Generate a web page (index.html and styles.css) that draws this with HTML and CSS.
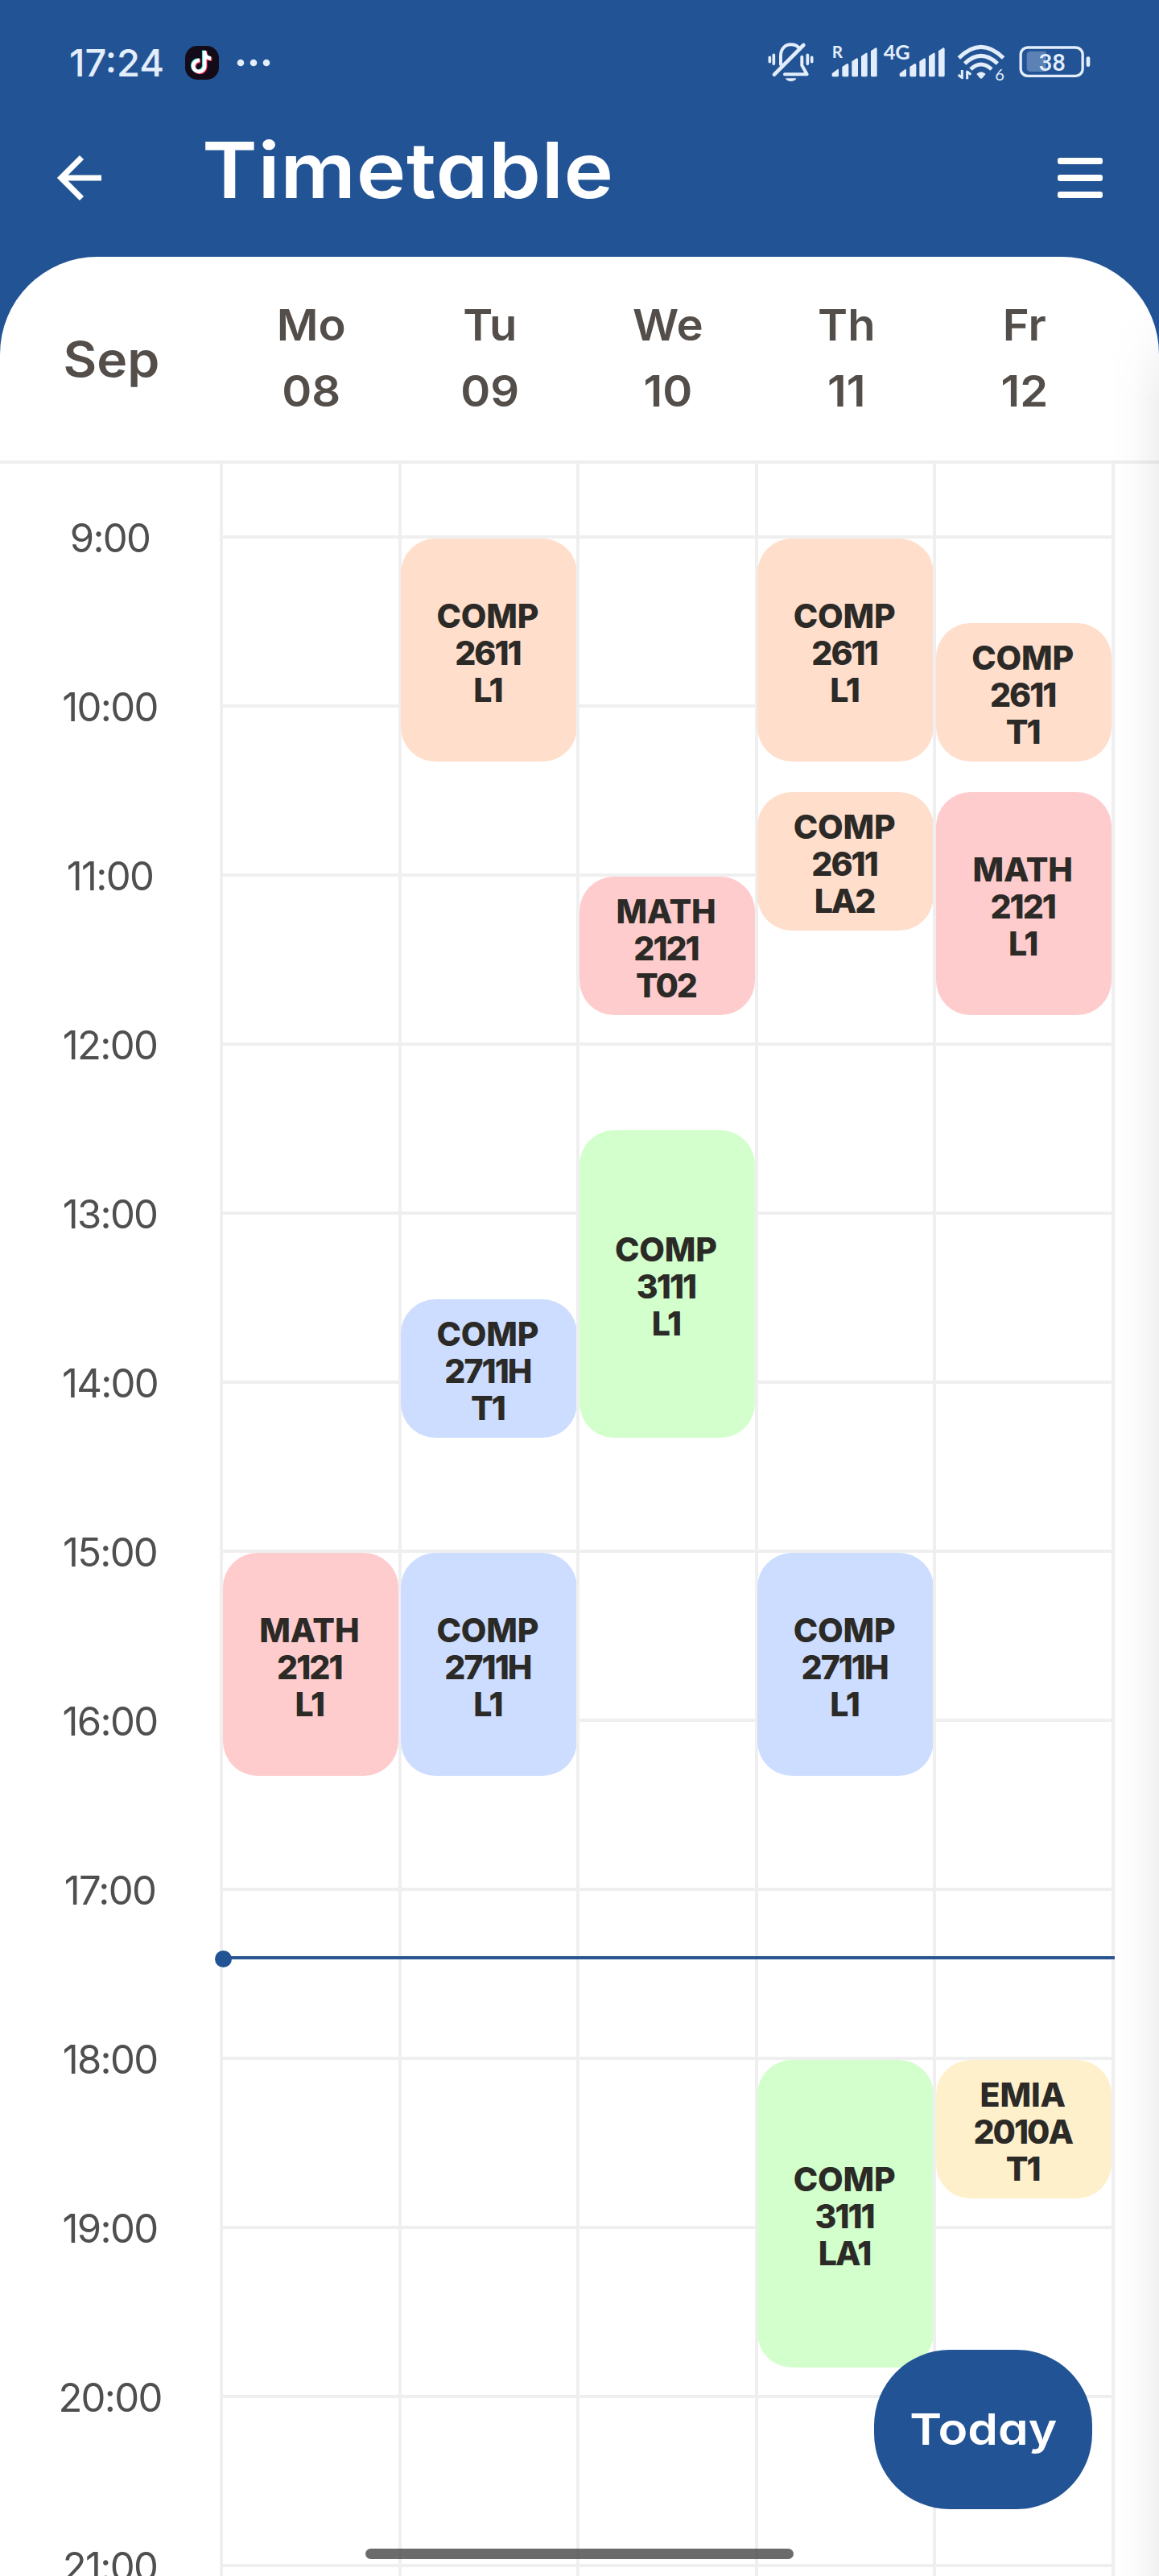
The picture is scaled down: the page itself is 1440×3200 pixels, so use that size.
FILE: index.html
```html
<!DOCTYPE html>
<html lang="en">
<head>
<meta charset="utf-8">
<title>Timetable</title>
<link rel="stylesheet" href="styles.css">
</head>
<body>
<div class="app">
  <div class="status-bar">
    <span class="clock">17:24</span>
    <svg class="tiktok" viewBox="0 0 42 42" width="42" height="42">
      <rect width="42" height="42" rx="15" fill="#130c18"/>
      <g fill="none" stroke-width="4.6">
        <path d="M24.2 6v19.5a7 7 0 1 1-6.2-7.4M24.2 8c.4 4.600 3.600 7.400 8 7.600" stroke="#35e0d6" transform="translate(-1 -.6)"/>
        <path d="M24.2 6v19.5a7 7 0 1 1-6.2-7.4M24.2 8c.4 4.600 3.600 7.400 8 7.600" stroke="#f5305a" transform="translate(1.100 1)"/>
        <path d="M24.2 6v19.5a7 7 0 1 1-6.2-7.4M24.2 8c.4 4.600 3.600 7.400 8 7.600" stroke="#fff"/>
      </g>
    </svg>
    <svg class="more" viewBox="0 0 42 10" width="42" height="10" fill="#e3edfb"><circle cx="5" cy="5" r="4.300"/><circle cx="21" cy="5" r="4.300"/><circle cx="37" cy="5" r="4.300"/></svg>
    <div class="indicators">
      <svg viewBox="100 60 230 160" width="76.667" height="53.333" fill="none" stroke="#e3edfb" stroke-linecap="round" stroke-linejoin="round">
        <path d="M110 124v16M125 115v33M251 115v33M267 124v16" stroke-width="11"/>
        <path d="M151 150V118c0-26 16-42 38-42 13 0 22 4 29 11M230 122v32l19 33H166" stroke-width="12"/>
        <path d="M236 78L127 188" stroke-width="14"/>
        <path d="M169 202h40c-5 15-35 15-40 0z" fill="#e3edfb" stroke="none"/>
      </svg>
      <svg viewBox="330 60 195 160" width="65" height="53.333" fill="#e3edfb">
        <text x="341" y="125" font-size="62" class="net">R</text>
        <path d="M341 184l22-17q3 0 3 4v20q0 5-5 5h-15q-5 0-5-5zM379 159l18-12q6-1 6 5v39q0 5-5 5h-14q-5 0-5-5zM415 139l18-12q5-1 5 5v59q0 5-5 5h-13q-5 0-5-5zM450 119l18-12q5-1 5 5v79q0 5-5 5h-13q-5 0-5-5zM486 100l18-12q5-1 5 5v98q0 5-5 5h-13q-5 0-5-5z"/>
      </svg>
      <svg viewBox="525 60 270 160" width="90" height="53.333" fill="#e3edfb">
        <text x="533" y="132" font-size="76" class="net">4G</text>
        <path transform="translate(252)" d="M341 184l22-17q3 0 3 4v20q0 5-5 5h-15q-5 0-5-5zM379 159l18-12q6-1 6 5v39q0 5-5 5h-14q-5 0-5-5zM415 139l18-12q5-1 5 5v59q0 5-5 5h-13q-5 0-5-5zM450 119l18-12q5-1 5 5v79q0 5-5 5h-13q-5 0-5-5zM486 100l18-12q5-1 5 5v98q0 5-5 5h-13q-5 0-5-5z"/>
      </svg>
      <svg viewBox="795 60 235 160" width="78.333" height="53.333" fill="none" stroke="#e3edfb" stroke-width="15">
        <path d="M814 126q82-82 166 0M836 147q60-57 122 0M858 168q38-36 78 0"/>
        <path d="M880 186q17-17 34 0l-12 14q-5 6-10 0z" fill="#e3edfb" stroke="none"/>
        <path d="M826 171v29l-14-11M845 205v-28l14 11" stroke-width="9" stroke-linejoin="round"/>
        <text x="949" y="209" font-size="60" class="wifi-gen">6</text>
      </svg>
      <svg viewBox="1030 60 290 160" width="96.667" height="53.333">
        <rect x="1045.500" y="87" width="231" height="106" rx="26" fill="none" stroke="#e3edfb" stroke-width="10"/>
        <path d="M1082 101h58v76h-58q-14 0-14-14v-48q0-14 14-14z" fill="#5c82b5"/>
        <rect x="1290" y="121" width="14" height="38" rx="7" fill="#e3edfb"/>
        <text x="1163" y="174" font-size="88" text-anchor="middle" class="charge">38</text>
      </svg>
    </div>
  </div>

  <header class="app-bar">
    <svg class="back" viewBox="0 0 64 64" width="64" height="64" fill="none" stroke="#fff" stroke-width="7.200"><path d="M34.500 6.500L9 32l25.500 25.500M9 32h50"/></svg>
    <h1 class="title">Timetable</h1>
    <div class="menu"><i></i><i></i><i></i></div>
  </header>

  <main class="sheet">
    <div class="days-head">
      <div class="month">Sep</div>
      <div class="day">Mo<br>08</div>
      <div class="day">Tu<br>09</div>
      <div class="day">We<br>10</div>
      <div class="day">Th<br>11</div>
      <div class="day">Fr<br>12</div>
    </div>

    <div class="week">
      <div class="hours">
        <span>9:00</span><span>10:00</span><span>11:00</span><span>12:00</span><span>13:00</span><span>14:00</span><span>15:00</span><span>16:00</span><span>17:00</span><span>18:00</span><span>19:00</span><span>20:00</span><span>21:00</span>
      </div>
      <!-- each grid row is ten minutes, the first one starts at 8:40 -->
      <div class="column">
        <div class="event red" style="grid-row: 39 / 47"><b>MATH</b><span>2121</span><span>L1</span></div>
      </div>
      <div class="column">
        <div class="event orange" style="grid-row: 3 / 11"><b>COMP</b><span>2611</span><span>L1</span></div>
        <div class="event blue" style="grid-row: 30 / 35"><b>COMP</b><span>2711H</span><span>T1</span></div>
        <div class="event blue" style="grid-row: 39 / 47"><b>COMP</b><span>2711H</span><span>L1</span></div>
      </div>
      <div class="column">
        <div class="event red" style="grid-row: 15 / 20"><b>MATH</b><span>2121</span><span>T02</span></div>
        <div class="event green" style="grid-row: 24 / 35"><b>COMP</b><span>3111</span><span>L1</span></div>
      </div>
      <div class="column">
        <div class="event orange" style="grid-row: 3 / 11"><b>COMP</b><span>2611</span><span>L1</span></div>
        <div class="event orange" style="grid-row: 12 / 17"><b>COMP</b><span>2611</span><span>LA2</span></div>
        <div class="event blue" style="grid-row: 39 / 47"><b>COMP</b><span>2711H</span><span>L1</span></div>
        <div class="event green" style="grid-row: 57 / 68"><b>COMP</b><span>3111</span><span>LA1</span></div>
      </div>
      <div class="column">
        <div class="event orange" style="grid-row: 6 / 11"><b>COMP</b><span>2611</span><span>T1</span></div>
        <div class="event red" style="grid-row: 12 / 20"><b>MATH</b><span>2121</span><span>L1</span></div>
        <div class="event yellow" style="grid-row: 57 / 62"><b>EMIA</b><span>2010A</span><span>T1</span></div>
      </div>
      <div class="edge"></div>
      <div class="now-line"></div>
    </div>
    <div class="edge-shade"></div>
  </main>

  <button class="today"><span>Today</span></button>
  <div class="home-indicator"></div>
</div>
</body>
</html>
```
FILE: styles.css
```css
* { box-sizing: border-box; }

body {
  margin: 0;
  background: #225495;
  font-family: Inter, "Noto Sans", sans-serif;
  font-feature-settings: "cv11";
}

.app {
  position: relative;
  display: flex;
  flex-direction: column;
  width: 1440px;
  height: 3200px;
  overflow: hidden;
  background: #225495;
}

/* status bar */
.status-bar {
  display: flex;
  align-items: center;
  height: 155px;
  padding: 0 80px 0 86px;
  color: #e3edfb;
}
.clock {
  width: 144px;
  font-size: 47px;
  font-weight: 500;
  line-height: 60px;
}
.more { margin-left: 22px; }
.indicators {
  display: flex;
  margin-left: auto;
  margin-top: -2px;
}
.net { font-weight: 700; font-family: Lato, sans-serif; }
.wifi-gen { font-family: Lato, sans-serif; stroke: none; fill: #e3edfb; }
.charge { font-weight: 500; font-family: Roboto, sans-serif; fill: #e3edfb; }

/* title bar */
.app-bar {
  display: flex;
  align-items: center;
  height: 132px;
  margin-bottom: 32px;
  padding: 0 70px 0 67px;
}
.title {
  margin: -21px 0 0 120px;
  color: #fff;
  font-size: 96px;
  font-weight: 600;
  line-height: 110px;
  letter-spacing: .6px;
  transform: scaleX(1.085);
  transform-origin: left;
}
.menu {
  display: flex;
  flex-direction: column;
  gap: 13.5px;
  width: 56px;
  margin-left: auto;
}
.menu i {
  height: 7.500px;
  border-radius: 3px;
  background: #fff;
}

/* white sheet */
.sheet {
  position: relative;
  flex: 1;
  display: flex;
  flex-direction: column;
  min-height: 0;
  overflow: hidden;
  border-radius: 121px 121px 0 0;
  background: #fff;
}
.edge-shade {
  position: absolute;
  top: 60px;
  right: 0;
  bottom: 0;
  width: 60px;
  background: linear-gradient(to right, rgba(0, 0, 0, 0), rgba(0, 0, 0, .015) 50%, rgba(0, 0, 0, .055));
  -webkit-mask-image: linear-gradient(transparent, #000 120px);
  mask-image: linear-gradient(transparent, #000 120px);
}
.days-head {
  display: grid;
  grid-template-columns: 277px repeat(5, 221.6px);
  align-items: center;
  height: 257px;
  border-bottom: 4px solid #efefef;
  color: #544e4b;
  font-weight: 600;
  text-align: center;
}
.month {
  font-size: 60px;
  transform: scaleX(1.07);
}
.day {
  font-size: 54px;
  line-height: 82px;
  transform: translate(-1px, -1px) scaleX(1.04);
}

/* week grid */
.week {
  position: relative;
  display: grid;
  grid-template-columns: 273px repeat(5, 221.6px) 4px;
  flex: 1;
  min-height: 0;
}
.hours {
  display: flex;
  flex-direction: column;
  gap: 160px;
  padding-top: 68px;
  color: #4f4f4f;
  font-size: 49px;
  letter-spacing: -1.7px;
  line-height: 50px;
  text-align: center;
}
.column {
  display: grid;
  grid-auto-rows: 35px;
  align-content: start;
  padding-top: 19px;
  border-left: 4px solid #efefef;
  background: repeating-linear-gradient(#efefef 0 4px, transparent 4px 210px) 0 89px / 100% 210px repeat-y;
}
.edge { background: #efefef; }
.event {
  display: flex;
  flex-direction: column;
  justify-content: center;
  align-items: center;
  margin: 4px -.5px -.7px -.5px;
  padding: 7px 3px 0 0;
  border-radius: 43px;
  color: #2b2a27;
  font-size: 41px;
  font-weight: 800;
  line-height: 46px;
  letter-spacing: -2px;
}
.event b { font-weight: 800; letter-spacing: -.2px; }
.orange { background: #ffdecc; }
.red { background: #fecccc; }
.green { background: #d2ffcc; }
.blue { background: #cdddff; }
.yellow { background: #fff0cc; }

.now-line {
  position: absolute;
  top: 1854px;
  left: 277px;
  right: 55px;
  height: 4px;
  background: #2b5591;
}
.now-line::before {
  content: "";
  position: absolute;
  top: -7px;
  left: -10px;
  width: 21px;
  height: 21px;
  border-radius: 50%;
  background: #225495;
}

/* floating layer */
.today {
  position: absolute;
  top: 2919px;
  left: 1086px;
  width: 271px;
  height: 198px;
  padding: 0;
  border: 0;
  border-radius: 94px;
  background: #225495;
  color: #fff;
  font: 600 54px/60px Inter, sans-serif;
  font-feature-settings: "cv11";
}
.today span {
  display: inline-block;
  transform: scaleX(1.12);
}
.home-indicator {
  position: absolute;
  left: 454px;
  bottom: 21px;
  width: 532px;
  height: 13px;
  border-radius: 7px;
  background: rgba(70, 70, 70, .8);
}
```
